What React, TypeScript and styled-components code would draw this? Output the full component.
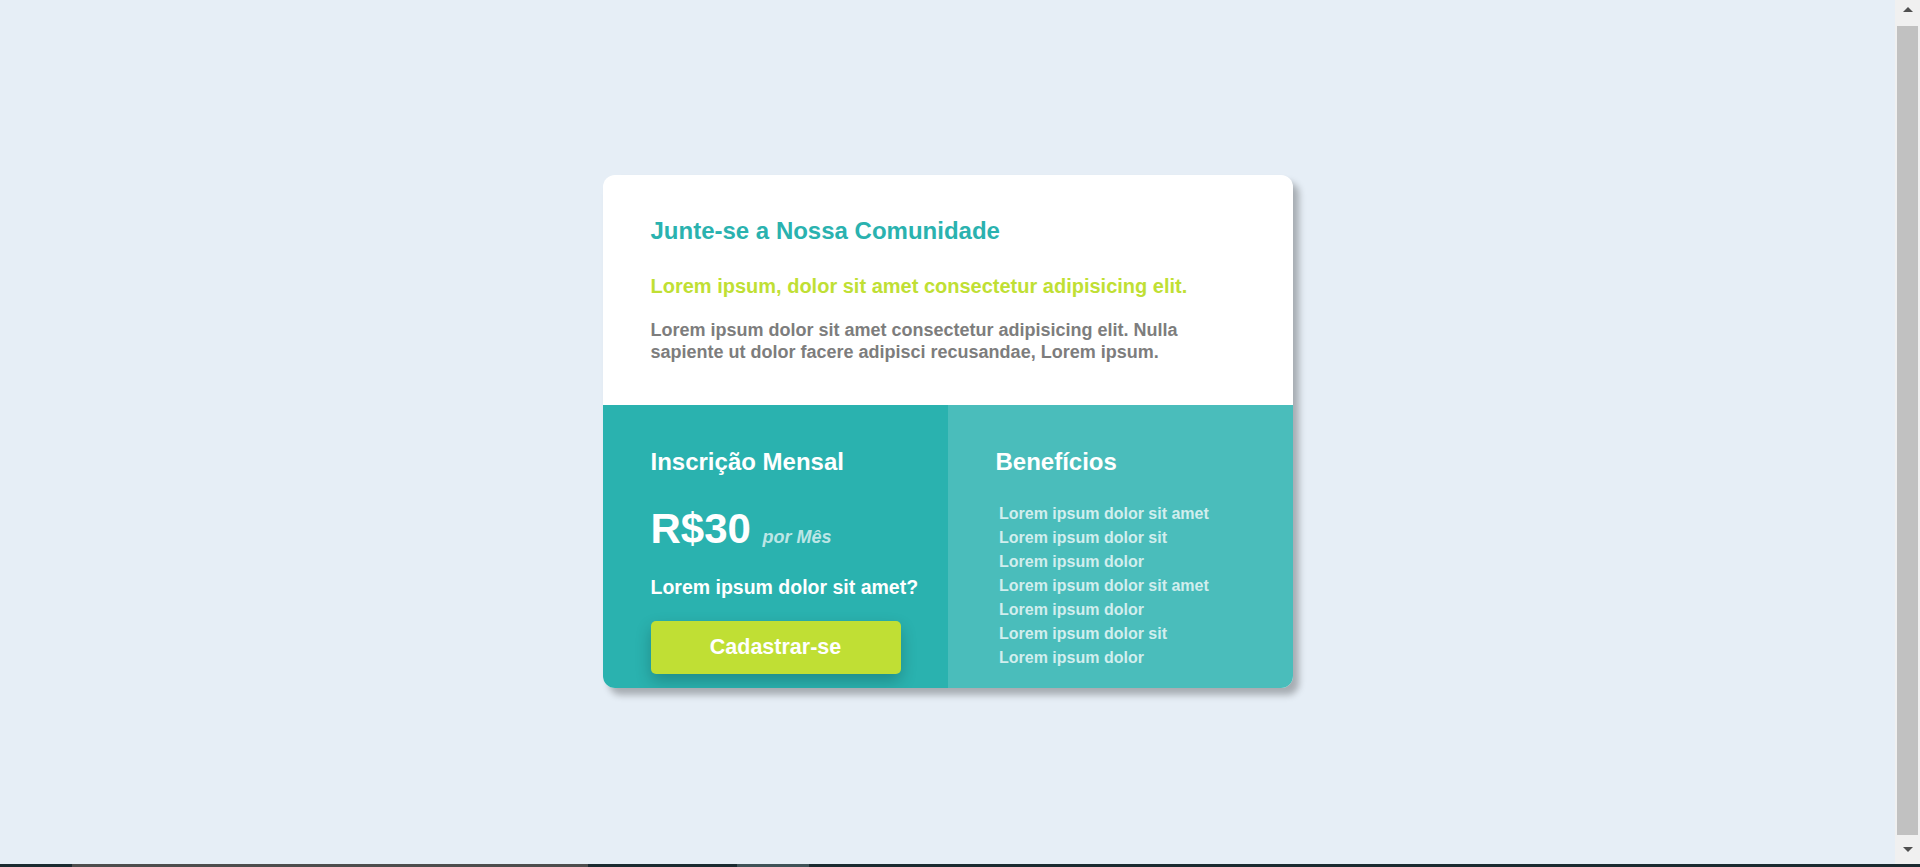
import React from "react";
import styled, { createGlobalStyle } from "styled-components";

const GlobalStyle = createGlobalStyle`
  html, body {
    margin: 0;
    height: 100%;
    overflow: hidden;
    background: #e6eef6;
    font-family: "Liberation Sans", Arial, sans-serif;
  }
`;

const CYAN = "#2ab2af";
const CYAN_LIGHT = "#4abdbb";
const YELLOW = "#c0df34";

const Screen = styled.div`
  display: flex;
  flex-direction: column;
  height: 100vh;
`;

const Viewport = styled.div`
  flex: 1;
  display: flex;
  min-height: 0;
`;

const Page = styled.main`
  flex: 1;
  display: flex;
  justify-content: center;
  align-items: flex-start;
  padding-top: 175px;
`;

const Rail = styled.div`
  width: 25px;
  display: flex;
  flex-direction: column;
  align-items: stretch;
  padding: 0 2px;
  box-sizing: border-box;
  background: #f0f0f0;
`;

const RailButton = styled.div<{ $h: number; $top: number }>`
  height: ${(p) => p.$h}px;
  padding-top: ${(p) => p.$top}px;
  box-sizing: border-box;
  display: flex;
  justify-content: center;
`;

const Arrow = styled.span<{ $dir: "up" | "down" }>`
  width: 0;
  height: 0;
  border-left: 5px solid transparent;
  border-right: 5px solid transparent;
  ${(p) =>
    p.$dir === "up"
      ? "border-bottom: 5px solid #505050;"
      : "border-top: 5px solid #505050;"}
`;

const Thumb = styled.div`
  flex: 1;
  background: #c1c1c1;
`;

const Taskbar = styled.div`
  height: 3px;
  display: flex;
  background: #1b2a30;
`;

const TaskSlot = styled.span<{ $w: number; $ml: number; $c: string }>`
  width: ${(p) => p.$w}px;
  margin-left: ${(p) => p.$ml}px;
  background: ${(p) => p.$c};
`;

const Card = styled.section`
  width: 690px;
  background: #ffffff;
  border-radius: 12px;
  overflow: hidden;
  box-shadow: 6px 7px 7px rgba(0, 0, 0, 0.28);
`;

const Intro = styled.div`
  padding: 42px 48px 42px;
`;

const Title = styled.h1`
  margin: 0;
  font-size: 24px;
  line-height: 28px;
  font-weight: 700;
  color: ${CYAN};
`;

const Lead = styled.p`
  margin: 29px 0 0;
  font-size: 20px;
  line-height: 24px;
  font-weight: 700;
  color: ${YELLOW};
`;

const Body = styled.p`
  margin: 22px 0 0;
  font-size: 18px;
  line-height: 21.5px;
  font-weight: 700;
  color: #7d7d7d;
`;

const Columns = styled.div`
  display: grid;
  grid-template-columns: minmax(0, 1fr) minmax(0, 1fr);
`;

const Column = styled.div<{ $tone: "dark" | "light" }>`
  padding: 43px 48px 14.5px;
  background: ${(p) => (p.$tone === "dark" ? CYAN : CYAN_LIGHT)};
  color: #ffffff;
`;

const ColTitle = styled.h2`
  margin: 0;
  font-size: 24px;
  line-height: 28px;
  font-weight: 700;
`;

const Price = styled.div`
  margin-top: 32px;
  font-size: 42px;
  line-height: 42px;
  font-weight: 700;
`;

const Per = styled.span`
  font-size: 18px;
  line-height: 18px;
  font-style: italic;
  color: rgba(255, 255, 255, 0.7);
`;

const Question = styled.p`
  margin: 25px 0 0;
  font-size: 19.5px;
  line-height: 24px;
  font-weight: 700;
  white-space: nowrap;
`;

const SignUp = styled.button`
  display: block;
  margin-top: 21.5px;
  width: 250px;
  height: 53px;
  border: none;
  border-radius: 5px;
  background: ${YELLOW};
  color: #ffffff;
  font-family: "Liberation Sans", Arial, sans-serif;
  font-size: 21.5px;
  font-weight: 700;
  cursor: pointer;
  box-shadow: 0 7px 16px rgba(0, 0, 0, 0.22);
`;

const Benefits = styled.ul`
  margin: 26px 0 3.5px;
  padding: 0 0 0 3.5px;
  list-style: none;
`;

const Benefit = styled.li`
  font-size: 16px;
  line-height: 24px;
  font-weight: 700;
  color: rgba(255, 255, 255, 0.75);
`;

const benefits = [
  "Lorem ipsum dolor sit amet",
  "Lorem ipsum dolor sit",
  "Lorem ipsum dolor",
  "Lorem ipsum dolor sit amet",
  "Lorem ipsum dolor",
  "Lorem ipsum dolor sit",
  "Lorem ipsum dolor",
];

export default function App() {
  return (
    <>
      <GlobalStyle />
      <Screen>
        <Viewport>
          <Page>
            <Card>
              <Intro>
                <Title>Junte-se a Nossa Comunidade</Title>
                <Lead>Lorem ipsum, dolor sit amet consectetur adipisicing elit.</Lead>
                <Body>
                  Lorem ipsum dolor sit amet consectetur adipisicing elit. Nulla
                  sapiente ut dolor facere adipisci recusandae, Lorem ipsum.
                </Body>
              </Intro>
              <Columns>
                <Column $tone="dark">
                  <ColTitle>Inscrição Mensal</ColTitle>
                  <Price>
                    R$30 <Per>por Mês</Per>
                  </Price>
                  <Question>Lorem ipsum dolor sit amet?</Question>
                  <SignUp>Cadastrar-se</SignUp>
                </Column>
                <Column $tone="light">
                  <ColTitle>Benefícios</ColTitle>
                  <Benefits>
                    {benefits.map((b, i) => (
                      <Benefit key={i}>{b}</Benefit>
                    ))}
                  </Benefits>
                </Column>
              </Columns>
            </Card>
          </Page>
          <Rail>
            <RailButton $h={26} $top={7}>
              <Arrow $dir="up" />
            </RailButton>
            <Thumb />
            <RailButton $h={29} $top={12}>
              <Arrow $dir="down" />
            </RailButton>
          </Rail>
        </Viewport>
        <Taskbar>
          <TaskSlot $w={516} $ml={72} $c="#4d4d4d" />
          <TaskSlot $w={72} $ml={149} $c="#3f5257" />
        </Taskbar>
      </Screen>
    </>
  );
}
